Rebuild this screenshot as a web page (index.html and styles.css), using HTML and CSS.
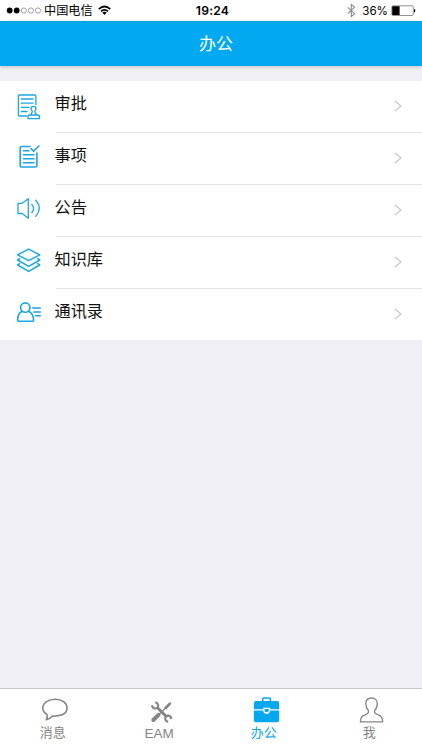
FILE: index.html
```
<!DOCTYPE html>
<html lang="zh-CN">
<head>
<meta charset="utf-8">
<title>办公</title>
<link rel="stylesheet" href="styles.css">
</head>
<body>
<div class="app">
  <div class="status">
    <div class="status-left">
      <svg class="dots" width="36" height="21" viewBox="0 0 36 21"><g fill="#000"><circle cx="3.7" cy="10.5" r="2.9"/><circle cx="10.7" cy="10.5" r="2.9"/></g><g fill="none" stroke="#777" stroke-width=".7"><circle cx="17.8" cy="10.5" r="2.6"/><circle cx="24.9" cy="10.5" r="2.6"/><circle cx="32" cy="10.5" r="2.6"/></g></svg>
      <span class="carrier">中国电信</span>
      <svg class="wifi" width="13" height="21" viewBox="0 0 13 21"><g fill="none" stroke="#000" stroke-width="1.7"><path d="M.8 9.2Q6.5 3.800 12.200 9.200"/><path d="M3 11.400Q6.500 8.200 10 11.400"/></g><path d="M4.300 12.600Q6.500 10.900 8.700 12.600L6.500 14.900Z"/></svg>
    </div>
    <div class="time">19:24</div>
    <div class="status-right">
      <svg width="9" height="21" viewBox="0 0 9 21"><path d="M.8 7.300L7.600 13.700 4.300 16.600V4.400L7.600 7.300.8 13.700" fill="none" stroke="#8a8a8a" stroke-width="1.100"/></svg>
      <span class="percent">36%</span>
      <svg width="25" height="21" viewBox="0 0 25 21"><rect x=".8" y="5.800" width="21.500" height="9.700" rx="1.300" fill="none" stroke="#777" stroke-width=".8"/><path d="M1.200 6.200H8.600V15.100H1.200ZM23 9H23.400Q24.300 9.300 24.300 10.700T23.400 12.400H23Z"/></svg>
    </div>
  </div>
  <header class="header">办公</header>
  <main class="content">
    <ul class="list">
      <li class="row">
        <svg class="icon" viewBox="0 0 56 52"><path d="M26.500 35H19.400Q18.400 35 18.400 34V15Q18.400 14 19.400 14H34.900Q35.900 14 35.900 15V23.500M21.300 18H33M21.300 22.200H33M21.300 26.300H29M21.300 30.500H27"/><path d="M32.200 31C32.900 30 31 29.200 31 27.900A2.500 2.500 0 0 1 36 27.900C36 29.200 34.200 30 34.900 31L36.500 34H38Q39.500 34 39.500 35.300V37.700H28V35.300Q28 34 29.500 34H30.700ZM30.700 34H36.500"/></svg>
        <div class="cell"><span class="label">审批</span><svg class="chevron" viewBox="0 0 8 12"><path d="M1 1L7 6 1 11"/></svg></div>
      </li>
      <li class="row">
        <svg class="icon bold" viewBox="0 0 56 52"><path d="M30 13.500H21.500Q20.200 13.500 20.200 14.800V32.700Q20.200 34 21.500 34H35.500Q36.900 34 36.900 32.700V20M31 15.500L33.500 18.300 38.900 13M23.500 17.800H29M23.500 21.800H34M23.500 25.800H34M23.500 29.800H34"/></svg>
        <div class="cell"><span class="label">事项</span><svg class="chevron" viewBox="0 0 8 12"><path d="M1 1L7 6 1 11"/></svg></div>
      </li>
      <li class="row">
        <svg class="icon" viewBox="0 0 56 52"><path d="M18 18.300H22.200L28.300 13.700V33.200L22.200 28.500H18ZM31.800 19.500Q35.500 23.500 31.800 27.500M35.700 15.300Q43 23.300 35.700 31.400"/></svg>
        <div class="cell"><span class="label">公告</span><svg class="chevron" viewBox="0 0 8 12"><path d="M1 1L7 6 1 11"/></svg></div>
      </li>
      <li class="row">
        <svg class="icon" viewBox="0 0 56 52"><path class="layers" d="M28.700 12.100L39.800 17.900 28.700 23.600 17.600 17.900ZM19.700 21.700L17.600 23 28.700 29.300 39.800 23 37.700 21.700M19.700 26.700L17.600 28 28.700 34.400 39.800 28 37.700 26.700"/></svg>
        <div class="cell"><span class="label">知识库</span><svg class="chevron" viewBox="0 0 8 12"><path d="M1 1L7 6 1 11"/></svg></div>
      </li>
      <li class="row">
        <svg class="icon contact" viewBox="0 0 56 52"><circle cx="25.300" cy="18.600" r="4.700"/><path d="M22.200 22.300Q17.600 24.500 17.600 31.300Q17.600 32.300 18.600 32.300H32.600Q33.600 32.300 33.600 31.300Q33.600 24.500 28.400 22.300M32.600 19H40.300M33.800 23H40.300M35.600 26.800H40.300"/></svg>
        <div class="cell"><span class="label">通讯录</span><svg class="chevron" viewBox="0 0 8 12"><path d="M1 1L7 6 1 11"/></svg></div>
      </li>
    </ul>
  </main>
  <nav class="tabs">
    <a class="tab">
      <svg viewBox="0 0 36 36"><path d="M15.500 27.100Q12.800 30.300 9.300 30.800Q10.700 28.500 10 25.600Q5.800 22.800 5.800 19C5.800 13.600 11.500 10.200 18.200 10.200S30 13.600 30 19S24.200 27.100 15.500 27.100Z" fill="none" stroke="#858585" stroke-width="1.600" stroke-linejoin="round"/></svg>
      <span>消息</span>
    </a>
    <a class="tab">
      <svg viewBox="0 0 36 36"><g fill="none" stroke="#858585"><path d="M14 18.300L23.500 27.700" stroke-width="3"/><path d="M9.200 16.200A3 3 0 1 0 12.200 13.500M28.200 30A3 3 0 1 0 25.200 32.700" stroke-width="2.200"/><path d="M10.300 31L15.500 25.900" stroke-width="4" stroke-linecap="round"/><path d="M15.500 26L26 15.500" stroke-width="1.600"/></g><path d="M21.200 18.600L25.700 14 28.200 13.100 27.800 15.600 23.200 20.400Z" fill="#858585"/></svg>
      <span class="latin">EAM</span>
    </a>
    <a class="tab active">
      <svg viewBox="0 0 36 36"><path d="M14.700 13V9.900Q14.700 9 15.600 9H21.400Q22.300 9 22.300 9.900V13" fill="none" stroke="#05a8ef" stroke-width="1.600"/><path d="M8 12H29Q31.200 12 31.200 14.200V20.200H22.300V18.800H15V20.200H5.900V14.200Q5.900 12 8 12ZM5.900 21.400H15.100Q15.500 24.800 18.600 24.800T22.200 21.400H31.200V31.200Q31.200 33.300 29 33.300H8Q5.900 33.300 5.900 31.200ZM16.500 20H20.900V21Q20.900 23.300 18.700 23.300T16.500 21Z" fill="#05a8ef"/></svg>
      <span>办公</span>
    </a>
    <a class="tab">
      <svg viewBox="0 0 36 36"><path d="M14.400 21.500C12.700 19.800 11.800 17 11.800 14.500C11.800 11.200 14.100 9 17.500 9S23.300 11.200 23.300 14.500C23.300 17 22.400 19.800 20.600 21.500C20.100 24.200 21.400 24.700 24.900 26.200C27.900 27.400 28.700 29 28.700 32.900H6.400C6.400 29 7.200 27.400 10.200 26.200C13.600 24.700 14.900 24.200 14.400 21.500Z" fill="none" stroke="#858585" stroke-width="1.300" stroke-linejoin="round"/></svg>
      <span>我</span>
    </a>
  </nav>
</div>
</body>
</html>
```
FILE: styles.css
```
* { box-sizing: border-box; }
body {
  margin: 0;
  font-family: "Liberation Sans", "Noto Sans CJK SC", sans-serif;
  color: #111;
}
.app {
  height: 750px;
  display: flex;
  flex-direction: column;
  background: #efeff5;
}
svg { display: block; flex: none; }
.status {
  height: 21px;
  flex: none;
  display: grid;
  grid-template-columns: 1fr auto 1fr;
  align-items: center;
  padding: 0 6px;
  background: #fff;
  color: #000;
  line-height: 21px;
}
.status-left, .status-right { display: flex; height: 21px; }
.status-right { justify-content: flex-end; }
.carrier { margin: 0 5px 0 2px; font-size: 12.2px; line-height: 23px; }
.time {
  font: bold 12.2px/21px Inter, sans-serif;
  font-weight: 600;
  letter-spacing: .2px;
  padding-left: 3px;
}
.percent { margin: 0 3px 0 6px; font: 11.600px/22px Inter, sans-serif; }
.header {
  height: 45px;
  flex: none;
  z-index: 1;
  padding-left: 10px;
  background: #02a9f0;
  box-shadow: 0 1px 4px rgba(0, 0, 0, .2);
  color: #fff;
  font-size: 17px;
  line-height: 47px;
  text-align: center;
}
.content { flex: 1; padding-top: 15px; }
.list { margin: 0; padding: 0; list-style: none; background: #fff; }
.row { height: 52px; display: flex; }
.row:last-child { height: 51px; }
.icon {
  width: 56px;
  height: 52px;
  fill: none;
  stroke: #1ba6e4;
  stroke-width: 1.3;
  stroke-linejoin: round;
  stroke-linecap: round;
}
.bold, .contact { stroke-width: 1.6; }
.layers { stroke-width: 1.5; }
.cell {
  flex: 1;
  display: flex;
  justify-content: space-between;
  padding: 0 20px 0 0;
  border-bottom: 1px solid #e4e4e6;
}
.row:last-child .cell { border-bottom: 0; }
.label { margin-left: -1.500px; font-size: 16.2px; line-height: 44px; }
.chevron {
  width: 8px;
  height: 12px;
  margin-top: 19px;
  fill: none;
  stroke: #c4c4c6;
  stroke-width: 1.1;
}
.tabs {
  height: 62px;
  flex: none;
  display: grid;
  grid-template-columns: repeat(4, 1fr);
  border-top: 1px solid #c4c4ca;
  background: #fff;
}
.tab {
  display: flex;
  flex-direction: column;
  align-items: center;
  color: #858585;
  font-size: 13px;
  line-height: 18px;
}
.tab svg { width: 36px; height: 36px; margin-left: 5px; }
.tab span { margin-top: -1px; }
.tab .latin { margin: 0 0 0 2px; font-size: 13.500px; }
.active { color: #05a8ef; }
```
